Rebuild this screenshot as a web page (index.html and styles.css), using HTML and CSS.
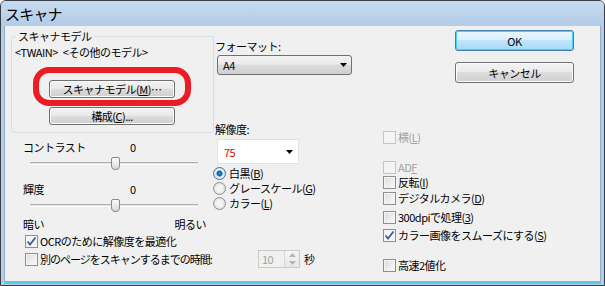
FILE: index.html
```html
<!DOCTYPE html>
<html lang="ja">
<head>
  <meta charset="UTF-8">
  <title>スキャナ</title>
  <link rel="stylesheet" href="styles.css">
</head>
<body>

<div class="window">
  <div class="titlebar">スキャナ</div>

  <div class="client">

    <!-- 左側: スキャナモデル / コントラスト / 輝度 -->
    <div class="col-left">
      <fieldset class="group">
        <legend>スキャナモデル</legend>
        <div class="model-name">&lt;TWAIN&gt; &lt;その他のモデル&gt;</div>
        <div class="btn-wrap">
          <button class="btn btn-model">スキャナモデル(<u>M</u>)…</button>
          <span class="ring"></span>
        </div>
        <button class="btn btn-setup">構成(<u>C</u>)...</button>
      </fieldset>

      <div class="value-row first"><span class="value-label">コントラスト</span><span>0</span></div>
      <div class="slider">
        <span class="track"></span>
        <span class="thumb"></span>
      </div>

      <div class="value-row"><span class="value-label">輝度</span><span>0</span></div>
      <div class="slider">
        <span class="track"></span>
        <span class="thumb"></span>
      </div>

      <div class="scale-row"><span>暗い</span><span>明るい</span></div>

      <div class="check-row ocr">
        <span class="box checked"><svg width="11" height="11" viewBox="0 0 11 11"><path d="M1.5 5.5 L4 8.5 L9.5 1.5" fill="none" stroke="#3d5a9c" stroke-width="1.8"/></svg></span>
        <span>OCRのために解像度を最適化</span>
      </div>
      <div class="check-row wait">
        <span class="box"></span>
        <span class="wait-label">別のページをスキャンするまでの時間:</span>
        <span class="spin">
          <span class="spin-value">10</span>
          <span class="spin-arrows">
            <svg width="7" height="4" viewBox="0 0 7 4"><path d="M0 4 L3.5 0 L7 4 Z" fill="#b4b4b4"/></svg>
            <svg width="7" height="4" viewBox="0 0 7 4"><path d="M0 0 L3.5 4 L7 0 Z" fill="#b4b4b4"/></svg>
          </span>
        </span>
        <span class="unit">秒</span>
      </div>
    </div>

    <!-- 中央: フォーマット / 解像度 -->
    <div class="col-mid">
      <div class="label-format">フォーマット:</div>
      <div class="select">
        <span>A4</span>
        <svg width="7" height="4" viewBox="0 0 7 4"><path d="M0 0 L7 0 L3.5 4 Z" fill="#000"/></svg>
      </div>
      <div class="label-dpi">解像度:</div>
      <div class="select-white">
        <span class="dpi">75</span>
        <svg width="7" height="4" viewBox="0 0 7 4"><path d="M0 0 L7 0 L3.5 4 Z" fill="#000"/></svg>
      </div>
      <div class="radio-row r1"><span class="radio on"></span><span>白黒(<u>B</u>)</span></div>
      <div class="radio-row"><span class="radio"></span><span>グレースケール(<u>G</u>)</span></div>
      <div class="radio-row"><span class="radio"></span><span>カラー(<u>L</u>)</span></div>
    </div>

    <!-- 右側: オプション -->
    <div class="col-right">
      <div class="check-row opt disabled c-yoko"><span class="box"></span><span>横(<u>L</u>)</span></div>
      <div class="check-row opt disabled c-ade"><span class="box"></span><span>AD<u>F</u></span></div>
      <div class="check-row opt c-rev"><span class="box"></span><span>反転(<u>I</u>)</span></div>
      <div class="check-row opt c-cam"><span class="box"></span><span>デジタルカメラ(<u>D</u>)</span></div>
      <div class="check-row opt c-300"><span class="box"></span><span>300dpiで処理(<u>3</u>)</span></div>
      <div class="check-row opt c-smooth">
        <span class="box checked"><svg width="11" height="11" viewBox="0 0 11 11"><path d="M1.5 5.5 L4 8.5 L9.5 1.5" fill="none" stroke="#3d5a9c" stroke-width="1.8"/></svg></span>
        <span>カラー画像をスムーズにする(<u>S</u>)</span>
      </div>
      <div class="check-row opt c-fast"><span class="box"></span><span>高速2値化</span></div>
    </div>

    <!-- ボタン -->
    <div class="col-buttons">
      <button class="btn btn-ok">OK</button>
      <button class="btn btn-cancel">キャンセル</button>
    </div>

  </div>
</div>

</body>
</html>
```

FILE: styles.css
```css
* {
  box-sizing: border-box;
}

body {
  margin: 0;
  font-family: "Noto Sans CJK JP", "Noto Sans", sans-serif;
  font-size: 11px;
  line-height: 14px;
  letter-spacing: -0.5px;
  color: #000;
  background: #fff;
}

u {
  text-decoration: underline;
  text-underline-offset: 1px;
}

.window {
  width: 605px;
  height: 286px;
  border: 1px solid #3a3f46;
  border-radius: 6px 6px 0 0;
  background: #b3cce8;
  display: flex;
  flex-direction: column;
}

.titlebar {
  height: 25px;
  padding: 3px 0 0 4px;
  font-size: 15px;
  line-height: 19px;
  letter-spacing: -0.8px;
  background: linear-gradient(#c6dbf0, #b3cce8);
  border-radius: 5px 5px 0 0;
}

.client {
  flex: 1;
  margin: 0 3px 3px 3px;
  background: #f0f0f0;
  border: 1px solid #93aecb;
  border-top: none;
  box-shadow: 0 2px 0 #5ec8ec;
  display: flex;
}

/* 左側 */
.col-left {
  width: 203px;
  margin-left: 6px;
  flex: none;
}

.group {
  margin: 3px 0 0 0;
  padding: 2px 3px 7px 3px;
  border: 1px solid #d5dfe5;
  border-radius: 3px;
  width: 203px;
}

.group legend {
  margin-left: 1px;
  padding: 0 2px;
  line-height: 14px;
}

.model-name {
  word-spacing: 3px;
}

.btn {
  font-family: inherit;
  font-size: 11px;
  letter-spacing: -0.5px;
  line-height: 14px;
  color: #000;
  border: 1px solid #707070;
  border-radius: 3px;
  background: linear-gradient(#f2f2f2 0%, #ebebeb 45%, #dddddd 50%, #cfcfcf 100%);
  box-shadow: inset 0 0 0 1px #fcfcfc;
  padding: 0;
  display: block;
}

.btn-wrap {
  position: relative;
  margin: 21px 0 0 34px;
  width: 126px;
}

.btn-model {
  width: 126px;
  height: 18px;
}

.ring {
  position: absolute;
  top: -13px;
  left: -16px;
  right: -16px;
  bottom: -8px;
  border: 6px solid #ed1c24;
  border-radius: 16px;
}

.btn-setup {
  margin: 9px 0 0 34px;
  width: 126px;
  height: 18px;
}

.value-row {
  display: flex;
  padding-left: 12px;
  margin-top: 12px;
  height: 14px;
}

.value-row.first {
  margin-top: 7px;
}

.value-label {
  width: 107px;
}

.slider {
  display: grid;
  margin: 2px 0 0 19px;
  width: 168px;
  height: 14px;
}

.track,
.thumb {
  grid-area: 1 / 1;
}

.track {
  align-self: center;
  height: 3px;
  border-top: 1px solid #b0b0b0;
  border-bottom: 1px solid #fdfdfd;
  background: #e3e3e3;
}

.thumb {
  width: 9px;
  height: 13px;
  margin: 1px 0 0 81px;
  border: 1px solid #8a8a8a;
  border-radius: 2px 2px 4px 4px;
  background: linear-gradient(#fbfbfb, #dadada);
}

.scale-row {
  display: flex;
  justify-content: space-between;
  width: 195px;
  padding-left: 12px;
  margin-top: 5px;
  height: 14px;
}

.check-row {
  display: flex;
  align-items: center;
  height: 14px;
  white-space: nowrap;
}

.check-row.ocr {
  margin-top: 3px;
  padding-left: 14px;
}

.check-row.wait {
  margin-top: 4px;
  padding-left: 14px;
}

.box {
  width: 13px;
  height: 13px;
  flex: none;
  margin-right: 2px;
  border: 1px solid #8e8f8f;
  background: linear-gradient(135deg, #dcdcdc, #fbfbfb);
  box-shadow: inset 0 0 0 1px #f4f4f4;
  display: flex;
  align-items: center;
  justify-content: center;
}

.box.checked {
  background: #f4f4f4;
}

.wait-label {
  flex: none;
  width: 218px;
  letter-spacing: -1px;
}

.spin {
  flex: none;
  display: flex;
  width: 42px;
  height: 18px;
  border: 1px solid #c9c9c9;
  background: #f0f0f0;
  color: #a0a0a0;
}

.spin-value {
  flex: 1;
  padding: 1px 0 0 3px;
}

.spin-arrows {
  width: 15px;
  display: flex;
  flex-direction: column;
  justify-content: space-around;
  align-items: center;
  border-left: 1px solid #d8d8d8;
  background: linear-gradient(#f6f6f6, #e6e6e6);
}

.unit {
  margin-left: 4px;
}

/* 中央 */
.col-mid {
  width: 168px;
  margin-left: 1px;
  flex: none;
}

.label-format {
  margin-top: 13px;
}

.select {
  margin: 2px 0 0 2px;
  width: 135px;
  height: 20px;
  border: 1px solid #707070;
  border-radius: 3px;
  background: linear-gradient(#f2f2f2 0%, #ebebeb 45%, #dddddd 50%, #cfcfcf 100%);
  display: flex;
  align-items: center;
  justify-content: space-between;
  padding: 0 4px 0 5px;
}

.label-dpi {
  margin-top: 47px;
}

.select-white {
  margin: 3px 0 0 2px;
  width: 82px;
  height: 25px;
  border: 1px solid #e2e2e2;
  background: #fff;
  display: flex;
  align-items: center;
  justify-content: space-between;
  padding: 0 5px 0 6px;
}

.dpi {
  color: #e00000;
}

.radio-row {
  display: flex;
  align-items: center;
  height: 14px;
  margin: 1px 0 0 -2px;
  white-space: nowrap;
}

.radio-row.r1 {
  margin-top: 2px;
}

.radio {
  width: 13px;
  height: 13px;
  margin-right: 3px;
  border-radius: 50%;
  border: 1px solid #8e8f8f;
  background: radial-gradient(circle at 50% 50%, #f6f6f6 30%, #d2d2d2 100%);
}

.radio.on {
  border-color: #4e6d96;
  background: radial-gradient(circle at 50% 50%, #2a8ee0 0, #0d63ae 2.5px, #e8eef4 3.5px, #d0d8e0 100%);
}

/* 右側 */
.col-right {
  width: 72px;
  flex: none;
}

.check-row.opt.c-yoko { margin-top: 104px; }
.check-row.opt.c-ade { margin-top: 16px; }
.check-row.opt.c-rev { margin-top: 1px; }
.check-row.opt.c-cam { margin-top: 2px; }
.check-row.opt.c-300 { margin-top: 5px; }
.check-row.opt.c-smooth { margin-top: 4px; }
.check-row.opt.c-fast { margin-top: 16px; }

.check-row.disabled {
  color: #a0a0a0;
}

.check-row.disabled .box {
  border-color: #c5c5c5;
  background: #f4f4f4;
  box-shadow: none;
}

/* ボタン */
.col-buttons {
  width: 119px;
  flex: none;
}

.btn-ok,
.btn-cancel {
  width: 119px;
  height: 21px;
}

.btn-ok {
  margin-top: 4px;
  border-color: #3c7fb1;
  background: linear-gradient(#eaf6fd 0%, #d9f0fc 45%, #bee6fd 50%, #a7d9f5 100%);
  box-shadow: inset 0 0 0 1px #48d2f9;
}

.btn-cancel {
  margin-top: 11px;
}
```
